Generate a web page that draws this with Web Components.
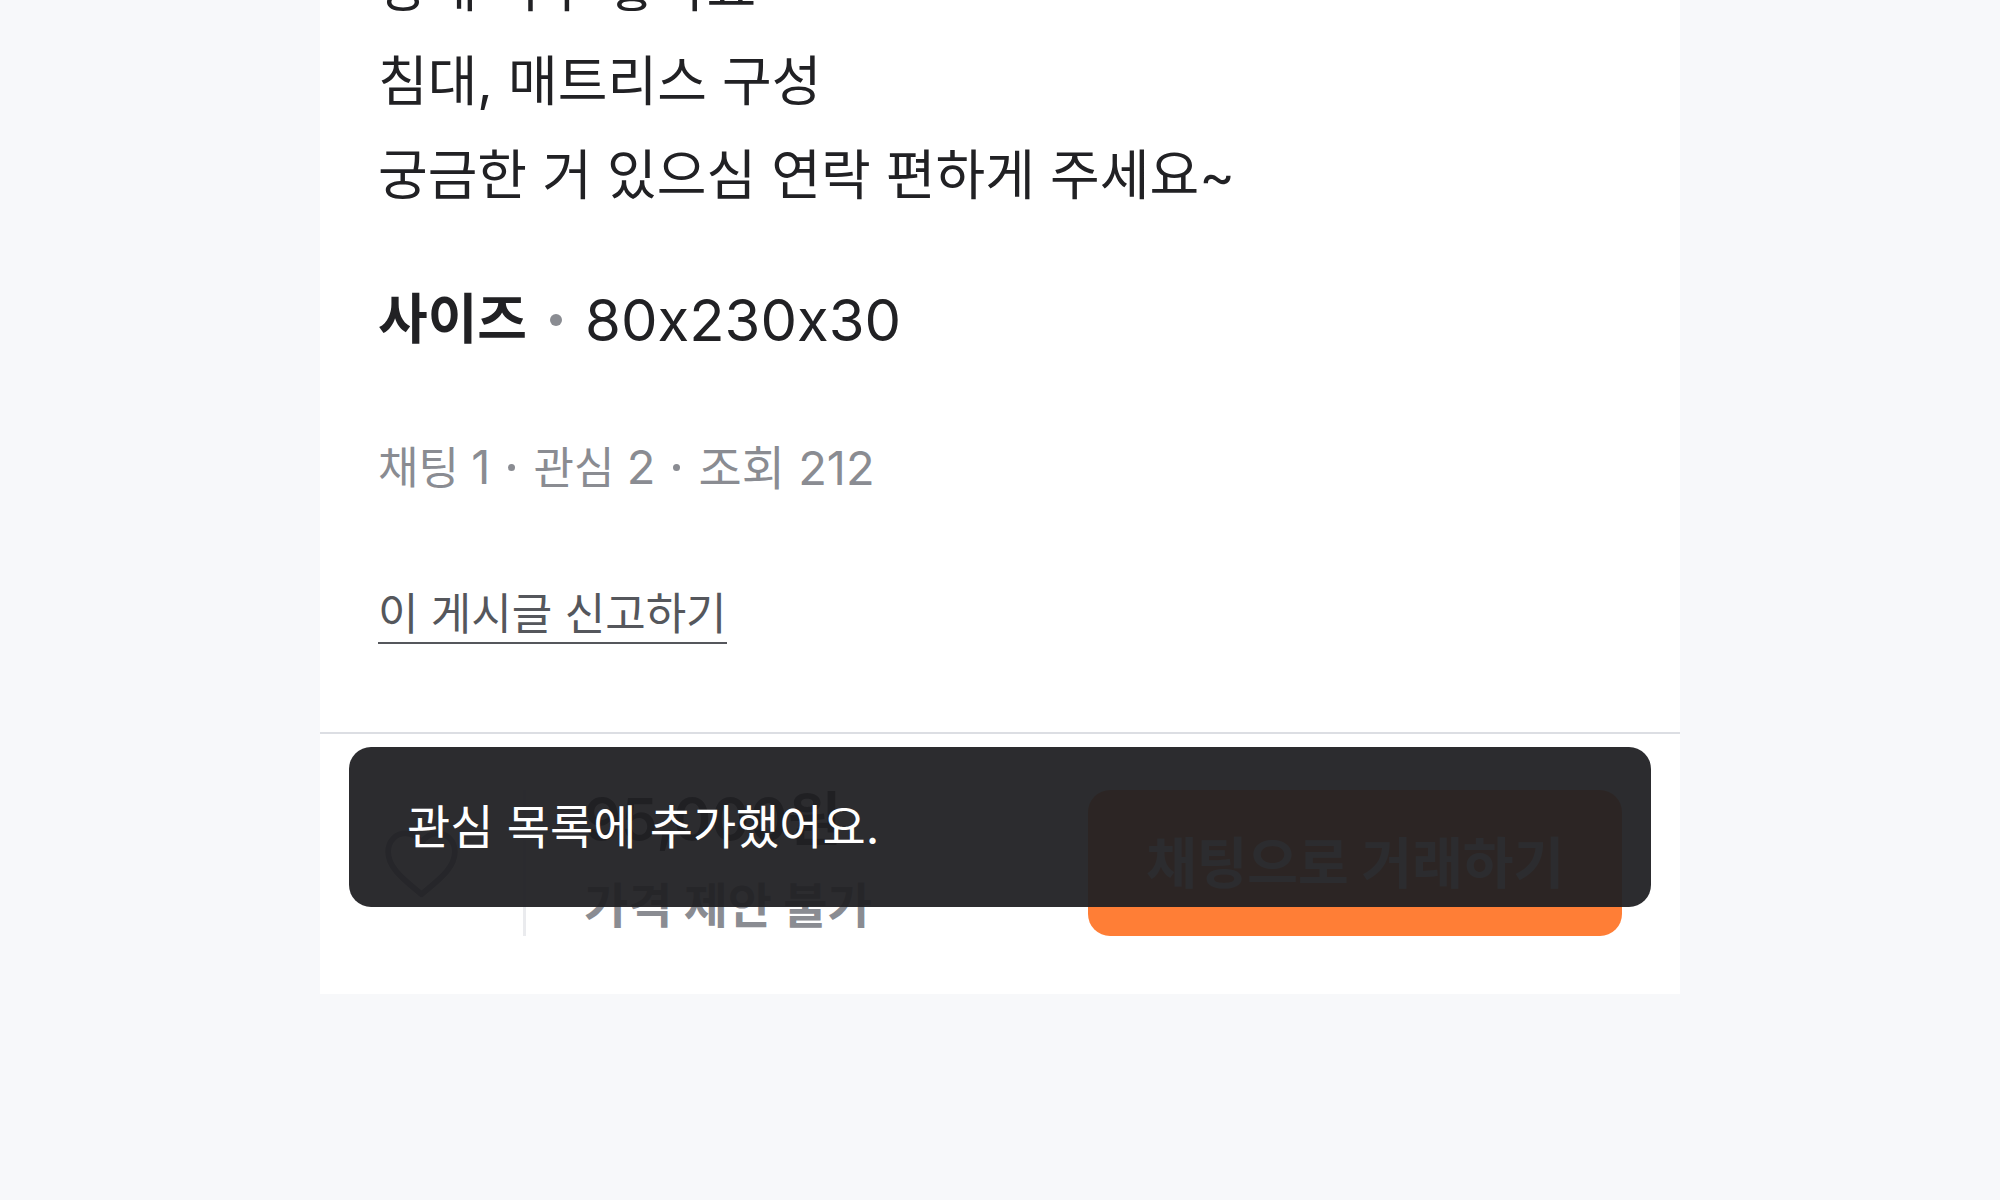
<!DOCTYPE html>
<html lang="ko">
<head>
  <meta charset="utf-8">
  <title>중고거래</title>
  <style>
    body {
      margin: 0;
      background: #f7f8fa;
      color: #212124;
      font-family: Inter, "Noto Sans CJK KR", sans-serif;
      font-variant-ligatures: no-contextual;
      --muted: #8a8c92;
      --link: #55575c;
    }
  </style>
</head>
<body>
  <item-page>
    <item-detail>
      <item-text>상태 아주 좋아요
침대, 매트리스 구성
궁금한 거 있으심 연락 편하게 주세요~</item-text>
      <item-spec label="사이즈">80x230x30</item-spec>
      <item-stats chats="1" likes="2" views="212"></item-stats>
      <report-link href="#report">이 게시글 신고하기</report-link>
    </item-detail>
    <action-bar slot="bar" price="95,000원" note="가격 제안 불가">
      채팅으로 거래하기
      <toast-message slot="toast">관심 목록에 추가했어요.</toast-message>
    </action-bar>
  </item-page>

  <script>
    // shared helper, every element below has an open shadow root
    class Base extends HTMLElement {
      constructor() {
        super();
        this.attachShadow({ mode: "open" });
      }

      connectedCallback() {
        this.shadowRoot.innerHTML = `<style>${this.pretty()}</style>${this.render()}`;
      }

      pretty() {
        return "";
      }

      render() {
        return "<slot></slot>";
      }
    }

    ////////////////////
    // Page
    ///////////////////

    class ItemPage extends Base {
      pretty() {
        return `
          :host { display: block; overflow: hidden; }
          main { width: 68%; margin: 0 auto; background: #fff; }
        `;
      }

      render() {
        return `<main><slot></slot><slot name="bar"></slot></main>`;
      }
    }

    class ItemDetail extends Base {
      pretty() {
        return `
          :host { display: flex; flex-direction: column; align-items: flex-start; padding: 0 58px 88px; }
        `;
      }
    }

    // the text is scrolled, its first line is cut by the top edge
    class ItemText extends Base {
      pretty() {
        return `
          :host { display: block; margin-top: -59px; font-size: 54px; line-height: 94px; white-space: pre-line; }
        `;
      }
    }

    class ItemSpec extends Base {
      pretty() {
        return `
          :host { display: block; margin-top: 50px; }
          dl { display: flex; align-items: center; gap: 23px; margin: 0; line-height: 94px; }
          dt { font-size: 54px; font-weight: 700; }
          i { width: 12px; height: 12px; border-radius: 50%; background: var(--muted); }
          dd { margin: 0; font-size: 58px; }
        `;
      }

      render() {
        return `<dl><dt>${this.getAttribute("label")}</dt><i></i><dd><slot></slot></dd></dl>`;
      }
    }

    class ItemStats extends Base {
      pretty() {
        return `
          :host { display: block; margin-top: 64px; }
          div { display: flex; align-items: center; gap: 18px; color: var(--muted); font-size: 44px; line-height: 72px; }
          i { width: 7px; height: 7px; border-radius: 50%; background: var(--muted); }
          b { font-size: 47px; font-weight: 400; }
          .views { font-size: 47px; }
        `;
      }

      render() {
        const att = (name) => this.getAttribute(name);
        return `<div>
          <span>채팅 <b>${att("chats")}</b></span><i></i>
          <span>관심 <b>${att("likes")}</b></span><i></i>
          <span class="views">조회 <b>${att("views")}</b></span>
        </div>`;
      }
    }

    class ReportLink extends Base {
      pretty() {
        return `
          :host { display: block; margin-top: 82px; }
          a { display: block; color: var(--link); font-size: 44px; line-height: 56px; text-decoration: none; border-bottom: 2px solid var(--link); }
        `;
      }

      render() {
        return `<a href="${this.getAttribute("href")}"><slot></slot></a>`;
      }
    }

    ////////////////////
    // Bottom bar
    ///////////////////

    class ActionBar extends Base {
      pretty() {
        return `
          :host { display: block; position: relative; border-top: 2px solid #dcdee3; }
          footer { display: flex; align-items: stretch; padding: 56px 58px 58px; }
          button { font: inherit; border: 0; padding: 0; cursor: pointer; }
          .like { display: flex; align-items: center; background: none; }
          svg { display: block; width: 87px; height: 87px; }
          .price { flex: 1; display: flex; flex-direction: column; gap: 28px; margin-left: 58px; padding-left: 58px; border-left: 3px solid #eaebee; }
          .price b { font-size: 58px; line-height: 58px; font-weight: 600; }
          .price span { color: var(--muted); font-size: 48px; line-height: 60px; font-weight: 700; }
          .chat { padding: 0 58px; border-radius: 22px; background: #ff7e36; color: #fff; font-size: 55px; line-height: 146px; font-weight: 700; }
        `;
      }

      render() {
        return `<footer>
          <button class="like" aria-label="관심">
            <svg viewBox="0 0 24 24" fill="none" stroke="#868b94" stroke-width="1.6" stroke-linejoin="round">
              <path d="M12 20.500 C8 17 2.800 13.500 2.800 8.800 C2.800 5.700 5 3.700 7.500 3.700 C9.500 3.700 11 4.700 12 6.300 C13 4.700 14.500 3.700 16.500 3.700 C19 3.700 21.200 5.700 21.200 8.800 C21.200 13.500 16 17 12 20.500 Z"/>
            </svg>
          </button>
          <div class="price"><b>${this.getAttribute("price")}</b><span>${this.getAttribute("note")}</span></div>
          <button class="chat"><slot></slot></button>
        </footer>
        <slot name="toast"></slot>`;
      }
    }

    // floats over the bar
    class ToastMessage extends Base {
      pretty() {
        return `
          :host { position: absolute; top: 13px; left: 29px; right: 29px; padding: 40px 58px; border-radius: 22px; background: rgba(33, 33, 36, 0.95); color: #fff; font-size: 47px; line-height: 80px; }
          p { margin: 0; }
        `;
      }

      render() {
        return `<p role="status"><slot></slot></p>`;
      }
    }

    customElements.define("item-page", ItemPage);
    customElements.define("item-detail", ItemDetail);
    customElements.define("item-text", ItemText);
    customElements.define("item-spec", ItemSpec);
    customElements.define("item-stats", ItemStats);
    customElements.define("report-link", ReportLink);
    customElements.define("action-bar", ActionBar);
    customElements.define("toast-message", ToastMessage);
  </script>
</body>
</html>
